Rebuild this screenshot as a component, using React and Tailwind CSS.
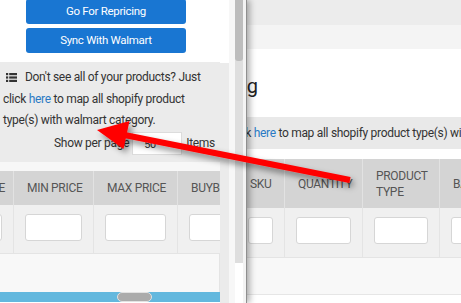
import React from 'react';

const font = { fontFamily: 'Roboto, "Liberation Sans", sans-serif' };

const ListIcon = () => (
  <svg width="11" height="9" viewBox="0 0 11 9" className="inline-block align-[-1px] ml-[3px] mr-[8px]">
    {[0, 3.4, 6.8].map((y) => (
      <g key={y} fill="#333">
        <rect x="0" y={y} width="2.2" height="2.2" />
        <rect x="3.2" y={y} width="7.8" height="2.2" />
      </g>
    ))}
  </svg>
);

const Input = () => (
  <div className="h-[27px] mx-[11px] bg-white border border-[#d6d6d6] rounded-[3px]"></div>
);

// left (mobile) window
const MobileWindow = () => {
  const cols = [
    { w: 84, label: 'BASE PRICE' },
    { w: 80, label: 'MIN PRICE' },
    { w: 84, label: 'MAX PRICE' },
    { w: 80, label: 'BUYBOX PRICE' },
  ];
  return (
    <div className="absolute left-0 top-0 h-full w-[247px] flex bg-white border-r border-[#8f8f8f] shadow-[3px_0_6px_rgba(0,0,0,0.3)] z-10">
      <div className="w-[220px] flex flex-col">
        {/* buttons */}
        <div className="h-[63px] flex flex-col items-start pl-[26px] gap-[4px] -mt-px">
          <button className="w-[160px] h-[25px] bg-[#1976d2] text-white text-[11.5px] tracking-[-0.3px] rounded-[3px]">
            Go For Repricing
          </button>
          <button className="w-[160px] h-[25px] bg-[#1976d2] text-white text-[11.5px] tracking-[-0.3px] rounded-[3px]">
            Sync With Walmart
          </button>
        </div>

        {/* info block */}
        <div className="h-[100px] bg-[#ebebeb] pl-[3px] pt-[5px] text-[12px] tracking-[-0.3px] text-[#333]">
          <p className="leading-[21.5px] whitespace-nowrap">
            <ListIcon />
            Don't see all of your products? Just
            <br />
            click <span className="text-[#2a7ac4]">here</span> to map all shopify product
            <br />
            type(s) with walmart category.
          </p>
          <div className="flex items-center justify-end pr-[5px] h-[23px]">
            <span>Show per page</span>
            <div className="ml-[3px] w-[50px] h-[23px] bg-white border border-[#dcdcdc] pl-[11px] pt-[4px] flex items-center text-[11px]">50</div>
            <span className="ml-[4px]">Items</span>
          </div>
        </div>

        <div className="h-[9px] bg-[#f7f7f7]"></div>

        {/* table */}
        <div className="overflow-hidden">
          <div className="flex -ml-[70px] h-[34px] bg-[#d4d4d4] text-[12px] tracking-[-0.3px] text-[#555]">
            {cols.map((c) => (
              <div key={c.label} style={{ width: c.w }} className="shrink-0 flex items-center pl-[13px] border-r border-[#e2e2e2] whitespace-nowrap">
                {c.label}
              </div>
            ))}
          </div>
          <div className="flex -ml-[70px] h-[49px] bg-[#f0f0f0] border-b border-[#e4e4e4]">
            {cols.map((c) => (
              <div key={c.label} style={{ width: c.w }} className="shrink-0 pt-[9px] border-r border-[#e4e4e4]">
                <Input />
              </div>
            ))}
          </div>
        </div>
        <div className="h-[38px] bg-[#f8f8f8] border-r border-[#e4e4e4]"></div>

        {/* horizontal scroller */}
        <div className="h-[10px] bg-[#63b8de] flex pl-[117px]">
          <div className="w-[35px] h-[10px] rounded-full bg-[#ababab] border-[1.5px] border-[#e2e2e2]"></div>
        </div>
      </div>

      <div className="w-[9px] mt-[63px] bg-[#ebebeb]"></div>
      <div className="w-[6px] bg-[#f7f7f7]"></div>
      {/* vertical scrollbar */}
      <div className="w-[8px] flex flex-col">
        <div className="h-[263px] bg-[#dedede]">
          <div className="h-[61px] bg-[#bdbdbd] rounded-b-[3px]"></div>
        </div>
      </div>
      <div className="w-[3px] bg-[#f3f3f3]"></div>
    </div>
  );
};

// right (desktop) window, partly covered
const DesktopWindow = () => {
  const cols = [
    { w: 48, label: 'SKU' },
    { w: 78, label: 'QUANTITY' },
    { w: 77, label: 'PRODUCT TYPE' },
    { w: 90, label: 'BARCODE' },
  ];
  return (
    <div className="absolute left-[246px] top-0 h-full w-[215px] overflow-hidden bg-white flex flex-col">
      <div className="h-[25px] bg-[#ececec]"></div>
      <div className="h-[24px] bg-[#f4f4f4]"></div>
      <div className="h-[68px] pt-[25px]">
        <div className="-ml-[66px] text-[20px] leading-[24px] text-[#222] whitespace-nowrap">Mapping</div>
      </div>
      <div className="h-[32px] bg-[#e9e9e9] flex items-center text-[12px] tracking-[-0.3px] text-[#333] whitespace-nowrap">
        <span className="-ml-[18px]">
          click <span className="text-[#2a7ac4]">here</span> to map all shopify product type(s) with walmart category.
        </span>
      </div>
      <div className="h-[10px]"></div>
      <div className="flex -ml-[9px] h-[49px] bg-[#d4d4d4] text-[12px] tracking-[-0.3px] text-[#555]">
        {cols.map((c) => (
          <div key={c.label} style={{ width: c.w }} className="shrink-0 flex items-center pl-[13px] pr-[8px] leading-[16px] border-r border-[#e2e2e2]">
            {c.label}
          </div>
        ))}
      </div>
      <div className="flex -ml-[9px] h-[50px] bg-[#f0f0f0] border-b border-[#e4e4e4]">
        {cols.map((c) => (
          <div key={c.label} style={{ width: c.w }} className="shrink-0 pt-[9px] border-r border-[#e4e4e4]">
            <Input />
          </div>
        ))}
      </div>
      <div className="h-[37px] bg-[#f8f8f8] border-b border-[#e6e6e6]"></div>
    </div>
  );
};

const Arrow = () => (
  <svg className="absolute inset-0 pointer-events-none z-20" width="461" height="303" viewBox="0 0 461 303">
    <defs>
      <filter id="sh" x="-20%" y="-50%" width="140%" height="200%">
        <feDropShadow dx="3" dy="4" stdDeviation="3" floodColor="#000" floodOpacity="0.45" />
      </filter>
    </defs>
    <g filter="url(#sh)" fill="#ff0000">
      <line x1="122" y1="134.5" x2="350" y2="180" stroke="#ff0000" strokeWidth="6" />
      <polygon points="97,130 129.5,121 123.5,149" />
    </g>
  </svg>
);

export default function App() {
  return (
    <div className="relative w-[461px] h-[303px] overflow-hidden bg-white" style={font}>
      <DesktopWindow />
      <MobileWindow />
      <Arrow />
    </div>
  );
}
